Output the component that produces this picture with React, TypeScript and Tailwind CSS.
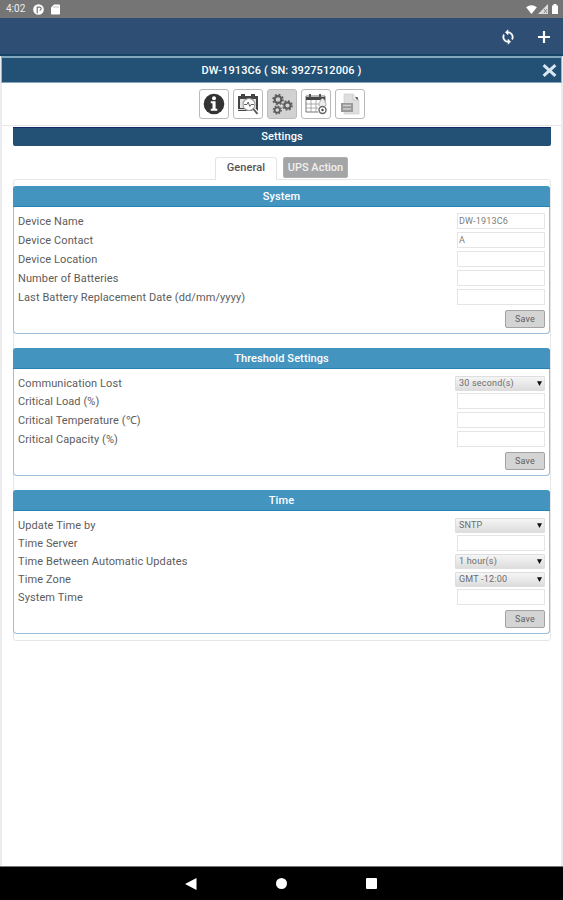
import React from "react";

type Field = { label: string; height: string; value?: string; select?: boolean };

const h18 = "h-[18px]";
const h19 = "h-[19px]";

const system: Field[] = [
  { label: "Device Name", height: h19, value: "DW-1913C6" },
  { label: "Device Contact", height: h19, value: "A" },
  { label: "Device Location", height: h19 },
  { label: "Number of Batteries", height: h19 },
  { label: "Last Battery Replacement Date (dd/mm/yyyy)", height: h19 },
];
const threshold: Field[] = [
  { label: "Communication Lost", height: h18, value: "30 second(s)", select: true },
  { label: "Critical Load (%)", height: h19 },
  { label: "Critical Temperature (℃)", height: h19 },
  { label: "Critical Capacity (%)", height: h19 },
];
const time: Field[] = [
  { label: "Update Time by", height: h18, value: "SNTP", select: true },
  { label: "Time Server", height: h19 },
  { label: "Time Between Automatic Updates", height: "h-[17px]", value: "1 hour(s)", select: true },
  { label: "Time Zone", height: h18, value: "GMT -12:00", select: true },
  { label: "System Time", height: h19 },
];

function Section({ title, fields, height }: { title: string; fields: Field[]; height: string }) {
  return (
    <section className={`-ml-px flex flex-col rounded-[4px] border border-t-0 border-[#9dbdd8] bg-white ${height}`}>
      <h2 className="-mx-px flex h-[21px] shrink-0 items-center justify-center rounded-t-[3px] border-b border-[#2585b2] bg-[#4494c0] pt-[2px] text-[11px] font-medium tracking-[0.1px] text-white">
        {title}
      </h2>
      <div className="flex flex-1 flex-col pt-[5px] pr-1 pl-[4px]">
        {fields.map((f) => (
          <div key={f.label} className={`flex items-center justify-between ${f.height}`}>
            <span className="text-[11px] leading-none tracking-[0.1px] whitespace-nowrap text-[#5c5c5c]">{f.label}</span>
            {f.select ? (
              <div className="flex h-[15px] w-[90px] items-center justify-between rounded-[1px] border border-[#dedede] bg-linear-to-b from-[#f5f5f5] to-[#dddddd] pr-[2px] pl-[3px] text-[9px] leading-none tracking-[0.2px] text-[#6c6c6c]">
                <span>{f.value}</span>
                <svg viewBox="0 0 5 5" className="size-[5px]"><path d="M0 .3h5L2.5 5z" fill="#111" /></svg>
              </div>
            ) : (
              <div className="mb-px flex h-4 w-[88px] items-center border border-[#e5e5e5] bg-white pt-px pl-px text-[9px] leading-none tracking-[0.2px] text-[#7c7c7c]">{f.value}</div>
            )}
          </div>
        ))}
        <button className="mt-[3px] h-[18px] w-10 self-end rounded-[2px] border border-[#a3a3a3] bg-[#d4d4d4] text-[9px] leading-none tracking-[0.2px] text-[#606060]">
          Save
        </button>
      </div>
    </section>
  );
}

function Gear({ cx, cy, r }: { cx: number; cy: number; r: number }) {
  return (
    <g transform={`translate(${cx} ${cy})`} stroke="#5c5c5c" fill="none">
      <circle r={r * 0.62} strokeWidth={r * 0.4} />
      <circle r={r * 0.92} strokeWidth={r * 0.3} strokeDasharray={`${r * 0.36} ${r * 0.3625}`} />
    </g>
  );
}

function Tool({ active, children }: { active?: boolean; children: React.ReactNode }) {
  return (
    <div className={`flex h-[30px] w-[30px] items-center justify-center rounded-[3px] border ${active ? "border-[#bcbcbc] bg-[#d2d2d2]" : "border-[#b9b9b9] bg-white"}`}>
      <svg viewBox="0 0 24 24" className="size-6 shrink-0">{children}</svg>
    </div>
  );
}

export default function App() {
  return (
    <div className="flex h-[900px] w-[563px] flex-col overflow-hidden bg-white font-['Roboto',sans-serif]">
      <div className="flex h-[18px] shrink-0 items-center justify-between bg-[#757575] pr-[5px] pl-[6px] text-white">
        <div className="flex items-center">
          <span className="w-[27px] text-[10px] leading-none text-[#eee]">4:02</span>
          <svg viewBox="0 0 12 12" className="size-[11px]">
            <circle cx="6" cy="6" r="5.8" fill="#fff" />
            <path d="M4.6 10V3.5h2.6a1.7 1.7 0 0 1 0 3.4" fill="none" stroke="#757575" strokeWidth="1.3" />
          </svg>
          <svg viewBox="0 0 9 11" className="ml-[7px] h-[11px] w-[9px]">
            <path d="M3 .5h5a1 1 0 0 1 1 1v8a1 1 0 0 1-1 1H1a1 1 0 0 1-1-1v-6z" fill="#fff" />
            <path d="M3 2v2M5 2v2M7 2v2" stroke="#a5a5a5" strokeWidth=".7" />
          </svg>
        </div>
        <div className="flex items-center">
          <svg viewBox="0 0 12 10" className="h-[9px] w-[11px]"><path d="M0 2.5Q6-1.8 12 2.5L6 10z" fill="#fff" /></svg>
          <svg viewBox="0 0 10 10" className="ml-px size-[10px]">
            <path d="M0 10L10 0v10z" fill="#ddd" />
            <path d="M6 5l3 4M9 5L6 9" stroke="#777" strokeWidth=".8" />
          </svg>
          <svg viewBox="0 0 6 10" className="ml-[4px] h-[10px] w-[6px]"><path d="M0 1.5h1.5V0h3v1.5H6V10H0z" fill="#fff" /></svg>
        </div>
      </div>

      <header className="flex h-[38px] shrink-0 items-center justify-end gap-[22px] border-b-2 border-[#154466] bg-[#2f4e73] pt-[2px] pr-[13px]">
        <svg viewBox="0 0 24 24" className="size-4">
          <path fill="#fff" stroke="#fff" strokeWidth=".7" d="M12 4V1L8 5l4 4V6c3.31 0 6 2.69 6 6 0 1.01-.25 1.97-.7 2.8l1.46 1.46A7.93 7.93 0 0 0 20 12c0-4.42-3.58-8-8-8zm0 14c-3.31 0-6-2.69-6-6 0-1.01.25-1.97.7-2.8L5.24 7.74A7.93 7.93 0 0 0 4 12c0 4.42 3.58 8 8 8v3l4-4-4-4z" />
        </svg>
        <svg viewBox="0 0 12 12" className="size-3"><path d="M6 0v12M0 6h12" stroke="#fff" strokeWidth="2.2" /></svg>
      </header>

      <div className="flex min-h-0 flex-1 flex-col border-x-2 border-[#ececee]">
        <div className="-mx-px flex h-[27px] shrink-0 items-center border-t-2 border-r border-b border-l border-x-[#9eb7c7] border-y-[#82a8bd] bg-[#235175] text-white">
          <div className="w-[19px]" />
          <h1 className="flex-1 text-center text-[11px] leading-none font-medium tracking-[0.1px]">DW-1913C6 ( SN: 3927512006 )</h1>
          <svg viewBox="0 0 14 12" className="mr-[4px] h-[13px] w-[15px]"><path d="M1.5 1l11 10M12.5 1l-11 10" stroke="#d8e7f0" strokeWidth="2.8" /></svg>
        </div>

        <div className="flex h-[43px] shrink-0 items-center justify-center gap-[4px] border-b border-[#e6e6e6]">
          <Tool>
            <circle cx="12" cy="12" r="10.3" fill="#333" />
            <circle cx="12" cy="6.3" r="2" fill="#fff" />
            <path d="M8.8 9.3h4.8v7.5h1.7v2H8.8v-2h1.7v-5.5H8.8z" fill="#fff" />
          </Tool>
          <Tool>
            <path d="M2 4h3V2h4v2h6V2h4v2h3v15H2z" fill="#444" />
            <path d="M4 7h16v9H4z" fill="#e4e4e4" />
            <path d="M2 17.5h7" stroke="#ddd" />
            <circle cx="13" cy="12.5" r="6" fill="#fff" stroke="#999" strokeWidth="1.1" />
            <path d="M8 12.5h3l1.2-2.5 1.6 4.5 1.2-2h3" fill="none" stroke="#666" strokeWidth="1" />
            <path d="M17.5 17l4.5 5" stroke="#fff" strokeWidth="4" />
            <path d="M17.3 17l4.2 4.8" stroke="#555" strokeWidth="1.8" />
          </Tool>
          <Tool active>
            <Gear cx={8} cy={7.5} r={5.4} />
            <Gear cx={17.5} cy={13.5} r={5} />
            <Gear cx={7.3} cy={18} r={4.3} />
          </Tool>
          <Tool>
            <path d="M2 4h19v16H2z" fill="#fff" stroke="#777" />
            <path d="M2 5h19v3H2z" fill="#444" />
            <path d="M6 2v4M16 2v4" stroke="#555" strokeWidth="2" />
            <path d="M2 12h19M2 16h19M7 8v12M12 8v12M17 8v12" stroke="#999" strokeWidth=".8" />
            <path d="M15 13.5v-2c1 0 1-5 3.5-5s2.5 5 3.5 5v2z" fill="#ededed" stroke="#999" strokeWidth=".7" />
            <circle cx="18.5" cy="18" r="5" fill="#fff" />
            <circle cx="18.5" cy="18" r="3.5" fill="none" stroke="#666" strokeWidth="1.4" />
            <circle cx="18.5" cy="18" r="1.2" fill="#444" />
          </Tool>
          <Tool>
            <path d="M6 2h9l6 6v14H6z" fill="#dedede" stroke="#ccc" strokeWidth=".7" />
            <path d="M15 2v6h6" fill="#f0f0f0" stroke="#bbb" strokeWidth=".7" />
            <path d="M17 5l3 .5-.5 2.5z" fill="#333" />
            <path d="M3 11h12v9H3z" fill="#999" />
            <path d="M5 13.5h8M5 17h8" stroke="#d0d0d0" strokeWidth="1.3" />
          </Tool>
        </div>

        <main className="flex flex-col pt-px pr-[10px] pl-[11px]">
          <div className="flex h-[19px] items-center justify-center rounded-b-[2px] border-t border-[#122e68] bg-[#235175] pt-px text-[11px] font-medium tracking-[0.1px] text-white">Settings</div>
          <div className="mt-[11px] flex h-[22px] justify-center gap-[6px] pr-px">
            <div className="z-10 -mb-px flex h-[23px] w-[62px] items-center justify-center rounded-t-[3px] border border-b-0 border-[#e4e4e4] bg-white pb-px text-[11px] font-medium tracking-[0.1px] text-[#555]">General</div>
            <div className="flex h-[21px] w-[65px] items-center justify-center rounded-[2px] border border-[#b0b0b0] bg-[#a3a5a6] pt-[2px] text-[11px] font-medium whitespace-nowrap text-[#f0f0f0]">UPS Action</div>
          </div>
          <div className="flex h-[462px] flex-col gap-[14px] rounded-[3px] border border-[#e6e6e8] pt-[6px]">
            <Section title="System" fields={system} height="h-[148px]" />
            <Section title="Threshold Settings" fields={threshold} height="h-[128px]" />
            <Section title="Time" fields={time} height="h-[144px]" />
          </div>
        </main>
      </div>

      <nav className="h-[34px] shrink-0 border-t border-[#777] bg-black">
        <div className="flex h-full items-center justify-center gap-[79px] pr-px">
          <svg viewBox="0 0 12 12" className="size-3"><path d="M0 6L11.5 0v12z" fill="#fff" /></svg>
          <div className="size-[11px] rounded-full bg-white" />
          <div className="size-[11px] rounded-[1px] bg-white" />
        </div>
      </nav>
    </div>
  );
}
